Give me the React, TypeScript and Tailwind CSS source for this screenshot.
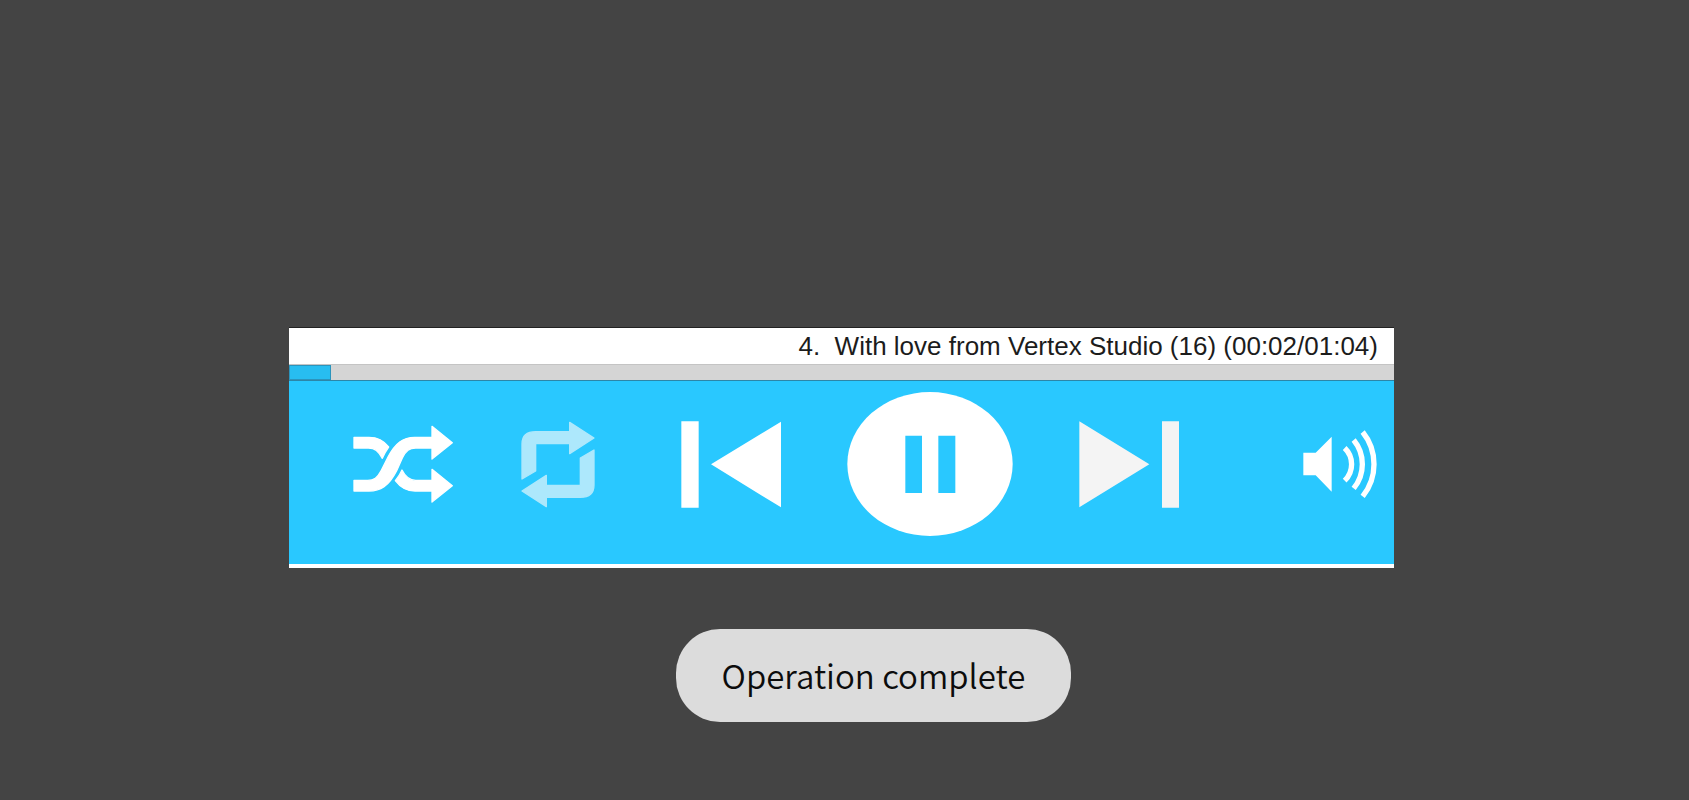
import React from "react";

const ShuffleIcon = () => (
  <svg viewBox="40 46 303 234" className="h-[78px] w-[101px]" fill="#fff" stroke="#fff" strokeWidth="4" strokeLinejoin="round" aria-hidden="true">
    <path d="M43 83H88C113 83 132 92 147 112C139 123 133 134 128 146C116 124 106 115 86 115H43Z" />
    <path d="M43 212H84C103 212 113 205 125 182L145 142C167 100 190 83 225 83H277V50L338 99L277 148V115H228C209 115 199 123 188 145L171 183C147 230 122 244 88 244H43Z" />
    <path d="M187 181C197 201 209 212 228 212H277V179L338 228L277 277V244H226C200 244 182 233 167 213C175 203 182 193 187 181Z" />
  </svg>
);

const RepeatIcon = () => (
  <svg viewBox="63 63 222 261" className="h-[87px] w-[74px]" fill="#ade8fc" stroke="#ade8fc" strokeWidth="4" strokeLinejoin="round" aria-hidden="true">
    <path id="repeat-half" d="M66 237V132Q66 95 107 95H209V67L282 114L209 161V131H107V213Z" />
    <use href="#repeat-half" transform="rotate(180 174 193.5)" />
  </svg>
);

const PreviousIcon = () => (
  <svg viewBox="63 123 300 261" className="h-[87px] w-[100px]" fill="#fff" aria-hidden="true">
    <path d="M64 124H116V383H64ZM153 253L363 125V382Z" />
  </svg>
);

const PauseIcon = () => (
  <svg viewBox="561 36 498 432" className="h-[144px] w-[166px]" aria-hidden="true">
    <ellipse cx="810" cy="252" rx="248" ry="216" fill="#fff" />
    <path d="M736 167H786V339H736ZM835 167H886V339H835Z" fill="#29c8ff" />
  </svg>
);

const NextIcon = () => (
  <svg viewBox="87 123 300 261" className="h-[87px] w-[100px]" fill="#f4f4f4" aria-hidden="true">
    <path d="M88 124L298 253L88 382ZM336 124H387V383H336Z" />
  </svg>
);

const VolumeIcon = () => (
  <svg viewBox="38 46 222 204" className="h-[68px] w-[74px]" fill="none" stroke="#fff" strokeWidth="16" aria-hidden="true">
    <path d="M39 114H76L124 66V231L76 182H39Z" fill="#fff" stroke="none" />
    <path d="M163 100A68 68 0 0 1 163 198" />
    <path d="M190 76A114 114 0 0 1 190 221" />
    <path d="M217 52A154 154 0 0 1 217 245" />
  </svg>
);

function ControlButton({ label, children }: { label: string; children: React.ReactNode }) {
  return (
    <button type="button" aria-label={label} className="shrink-0 cursor-pointer">
      {children}
    </button>
  );
}

export default function App() {
  return (
    <main className="flex min-h-screen flex-col bg-[#444444] pt-[327px]">
      <section aria-label="Music player" className="mr-[295px] ml-[289px] border-t border-[#222222] bg-white pb-1">
        <p className="h-9 overflow-hidden pr-4 text-right font-['Liberation_Sans',Arial,sans-serif] text-[26px] leading-9 whitespace-nowrap text-[#1c1c1c]">
          4.&nbsp; With love from Vertex Studio (16) (00:02/01:04)
        </p>
        <progress
          aria-label="Playback position"
          value={2.45}
          max={64}
          className="block h-[17px] w-full appearance-none border-y border-t-[#c4c4c4] border-b-[#2c86a8] bg-[#d5d5d5] [&::-webkit-progress-bar]:bg-[#d5d5d5] [&::-webkit-progress-value]:border [&::-webkit-progress-value]:border-[#2c94bc] [&::-webkit-progress-value]:bg-[#28bdf0]"
        />
        <div className="flex items-center bg-[#29c8ff] pt-[11px] pr-[17px] pb-7 pl-16">
          <div className="flex items-center gap-[67px]">
            <ControlButton label="Shuffle"><ShuffleIcon /></ControlButton>
            <ControlButton label="Repeat"><RepeatIcon /></ControlButton>
          </div>
          <div className="ml-[86px] flex items-center gap-[66px]">
            <ControlButton label="Previous"><PreviousIcon /></ControlButton>
            <ControlButton label="Pause"><PauseIcon /></ControlButton>
            <ControlButton label="Next"><NextIcon /></ControlButton>
          </div>
          <div className="ml-auto flex">
            <ControlButton label="Volume"><VolumeIcon /></ControlButton>
          </div>
        </div>
      </section>
      <div className="flex justify-center pt-[61px] pl-[58px]">
        <div role="status" className="rounded-[44px] bg-[#dcdcdc] px-[46px] py-6 font-['Noto_Sans_CJK_SC','Noto_Sans',sans-serif] text-[33px] leading-[45px] font-[350] text-[#0c0c0c]">
          Operation complete
        </div>
      </div>
    </main>
  );
}
